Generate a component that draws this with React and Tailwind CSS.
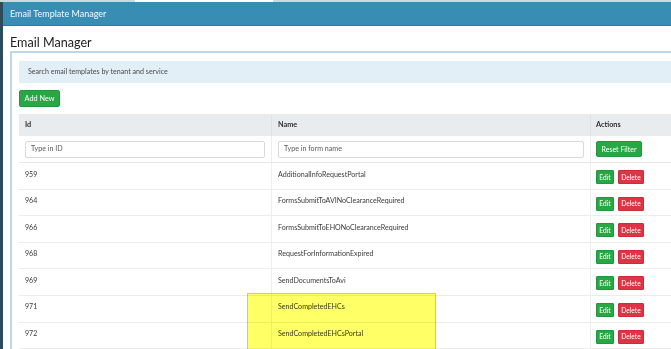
import React from "react";

const rows = [
  ["959", "AdditionalInfoRequestPortal"],
  ["964", "FormsSubmitToAVINoClearanceRequired"],
  ["966", "FormsSubmitToEHONoClearanceRequired"],
  ["968", "RequestForInformationExpired"],
  ["969", "SendDocumentsToAvi"],
  ["971", "SendCompletedEHCs"],
  ["972", "SendCompletedEHCsPortal"],
];

export default function App() {
  return (
    <div
      className="relative w-[671px] h-[349px] overflow-hidden bg-white flex flex-col"
      style={{ fontFamily: "Lato, 'Open Sans', sans-serif" }}
    >
      {/* top browser strip */}
      <div className="h-[2px] shrink-0 flex">
        <div className="w-[135px] bg-[#cfd8de]" />
        <div className="w-[138px] bg-white" />
        <div className="flex-1 bg-[#cfd8de]" />
      </div>
      <div className="flex flex-1 min-h-0">
        <div className="w-[3px] shrink-0 bg-[#2d4b5b]" />
        <div className="flex-1 min-w-0 flex flex-col">
          <div className="h-[24px] shrink-0 bg-[#388db4] border-b border-[#2f7aa0] flex items-center pl-[7px] pt-[1px] text-[#f4f9fc] text-[9px]">
            Email Template Manager
          </div>
          <div className="pl-[7px] pt-[10px] h-[25px] shrink-0 text-[12.6px] leading-[14px] text-[#1e1e1e]">
            Email Manager
          </div>
          <div className="flex-1 min-h-0 ml-[7px] border-l-2 border-t-2 border-[#bcd9ea] pl-[7px] pt-[8px] flex flex-col">
            <div className="h-[22px] shrink-0 bg-[#e3eff7] flex items-center pl-[9px] pt-[1px] text-[7.1px] text-[#4a4a4a]">
              Search email templates by tenant and service
            </div>
            <div className="pt-[7px] pb-[7px] shrink-0">
              <div className="w-[41px] h-[17px] bg-[#28a745] border border-[#23963d] rounded-[2px] pt-[1px] text-white text-[7.3px] flex items-center justify-center">
                Add New
              </div>
            </div>
            <div className="w-[700px] flex flex-col">
              <div className="h-[22px] bg-[#e9ecef] flex text-[7.3px] font-bold text-[#2e2e2e] pt-[1px]">
                <div className="w-[253px] border-r border-[#dee2e6] flex items-center pl-[6px]">Id</div>
                <div className="w-[319px] border-r border-[#dee2e6] flex items-center pl-[6px]">Name</div>
                <div className="flex-1 flex items-center pl-[5px]">Actions</div>
              </div>
              <div className="h-[27px] flex border-b border-[#e6e6e6]">
                <div className="w-[253px] border-r border-[#eeeeee] flex items-center px-[6px]">
                  <div className="w-full h-[17px] border border-[#d9d9d9] rounded-[2px] flex items-center pl-[5px] pt-[1px] text-[7.1px] text-[#5a5a5a]">
                    Type in ID
                  </div>
                </div>
                <div className="w-[319px] border-r border-[#eeeeee] flex items-center px-[6px]">
                  <div className="w-full h-[17px] border border-[#d9d9d9] rounded-[2px] flex items-center pl-[5px] pt-[1px] text-[7.1px] text-[#5a5a5a]">
                    Type in form name
                  </div>
                </div>
                <div className="flex-1 flex items-center pl-[5px]">
                  <div className="w-[46px] h-[16px] bg-[#28a745] border border-[#23963d] rounded-[2px] pt-[1px] text-white text-[7px] flex items-center justify-center">
                    Reset Filter
                  </div>
                </div>
              </div>
              {rows.map(([id, name]) => (
                <div key={id} className="h-[26.6px] flex border-b border-[#ececec] text-[7.1px] text-[#3a3a3a]">
                  <div className="w-[253px] border-r border-[#eeeeee] pl-[6px] pt-[6.5px]">{id}</div>
                  <div className="w-[319px] border-r border-[#eeeeee] pl-[6px] pt-[6.5px]">{name}</div>
                  <div className="flex-1 flex items-start gap-[4px] pl-[5px] pt-[7px]">
                    <div className="w-[18px] h-[14px] bg-[#28a745] border border-[#23963d] rounded-[1px] pt-[1px] text-white text-[6.6px] flex items-center justify-center">
                      Edit
                    </div>
                    <div className="w-[26px] h-[14px] bg-[#dc3545] border border-[#d02a3b] rounded-[1px] pt-[1px] text-white text-[6.6px] flex items-center justify-center">
                      Delete
                    </div>
                  </div>
                </div>
              ))}
            </div>
          </div>
        </div>
      </div>
      <div className="absolute left-[247px] top-[293px] w-[189px] h-[57px] bg-[#ffff66] border border-[#efc93a] mix-blend-multiply" />
    </div>
  );
}
